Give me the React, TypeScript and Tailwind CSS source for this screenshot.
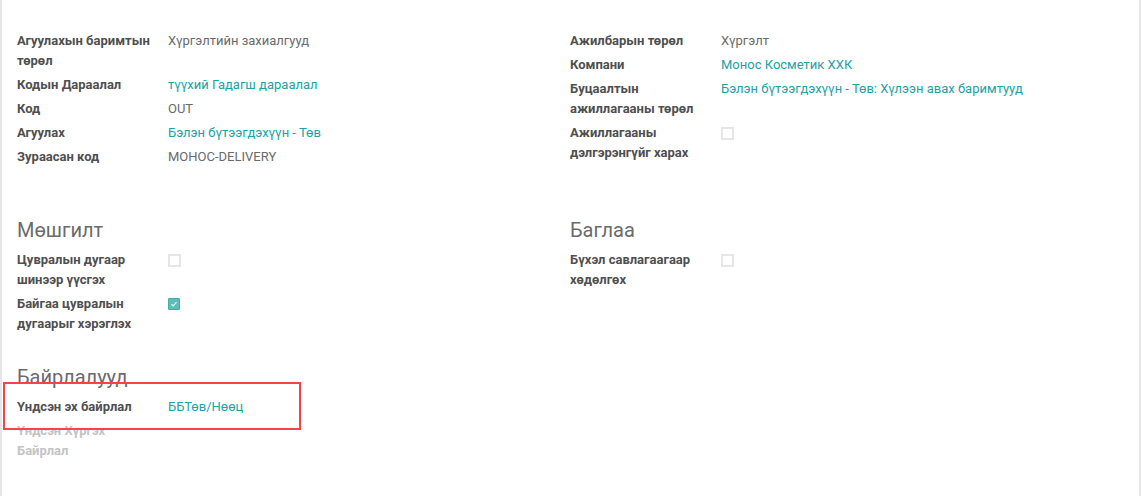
import React from "react";

const LINK = "text-[#21a1a5]";

function Checkbox({ checked = false }: { checked?: boolean }) {
  return (
    <div className="pt-[4px]">
      {checked ? (
        <div className="w-[12px] h-[12px] rounded-[1px] bg-[#5dbdb8] border border-[#4aa9a4] flex items-center justify-center">
          <svg width="8" height="8" viewBox="0 0 8 8">
            <path d="M1.5 4.2 L3.2 5.8 L6.5 2.2" stroke="#ffffff" strokeWidth="1.2" fill="none" opacity="0.85" />
          </svg>
        </div>
      ) : (
        <div className="w-[13px] h-[13px] bg-white border-2 border-[#e6e6e6]" />
      )}
    </div>
  );
}

function Row({
  label,
  children,
  faded = false,
}: {
  label: string;
  children?: React.ReactNode;
  faded?: boolean;
}) {
  return (
    <div className="flex mb-[4px]">
      <div
        className={`w-[151px] shrink-0 pr-[14px] font-bold ${
          faded ? "text-[#c4c4c4]" : "text-[#4f4f4f]"
        }`}
      >
        {label}
      </div>
      <div className="flex-1 text-[#6a6a6a]">{children}</div>
    </div>
  );
}

function Heading({ children }: { children: React.ReactNode }) {
  return (
    <div className="text-[20px] leading-[28px] text-[#6b6b6b] font-normal mb-[6px]">
      {children}
    </div>
  );
}

export default function App() {
  return (
    <div
      className="w-[1142px] h-[497px] bg-white overflow-hidden"
      style={{ fontFamily: "Roboto, 'Noto Sans', sans-serif" }}
    >
      <div className="relative w-[1141px] h-[496px] border-l-2 border-r-2 border-[#e6e6e6] pl-[15px] pt-[31px] text-[13px] leading-[20px]">
        <div className="grid grid-cols-[553px_552px]">
          <div>
            <Row label="Агуулахын баримтын төрөл">Хүргэлтийн захиалгууд</Row>
            <Row label="Кодын Дараалал">
              <span className={LINK}>түүхий Гадагш дараалал</span>
            </Row>
            <Row label="Код">OUT</Row>
            <Row label="Агуулах">
              <span className={LINK}>Бэлэн бүтээгдэхүүн - Төв</span>
            </Row>
            <Row label="Зураасан код">MOHOC-DELIVERY</Row>
          </div>
          <div>
            <Row label="Ажилбарын төрөл">Хүргэлт</Row>
            <Row label="Компани">
              <span className={LINK}>Монос Косметик ХХК</span>
            </Row>
            <Row label="Буцаалтын ажиллагааны төрөл">
              <span className={LINK}>Бэлэн бүтээгдэхүүн - Төв: Хүлээн авах баримтууд</span>
            </Row>
            <Row label="Ажиллагааны дэлгэрэнгүйг харах">
              <Checkbox />
            </Row>
          </div>
        </div>

        <div className="grid grid-cols-[553px_552px] mt-[45px]">
          <div>
            <Heading>Мөшгилт</Heading>
            <Row label="Цувралын дугаар шинээр үүсгэх">
              <Checkbox />
            </Row>
            <Row label="Байгаа цувралын дугаарыг хэрэглэх">
              <Checkbox checked />
            </Row>
          </div>
          <div>
            <Heading>Баглаа</Heading>
            <Row label="Бүхэл савлагаагаар хөдөлгөх">
              <Checkbox />
            </Row>
          </div>
        </div>

        <div className="mt-[25px]">
          <Heading>Байрлалууд</Heading>
          <Row label="Үндсэн эх байрлал">
            <span className={LINK}>ББТөв/Нөөц</span>
          </Row>
          <Row label="Үндсэн Хүргэх Байрлал" faded />
        </div>

        <div className="absolute left-[1px] top-[382px] w-[298px] h-[48px] border-2 border-[#f4444a]" />
      </div>
    </div>
  );
}
